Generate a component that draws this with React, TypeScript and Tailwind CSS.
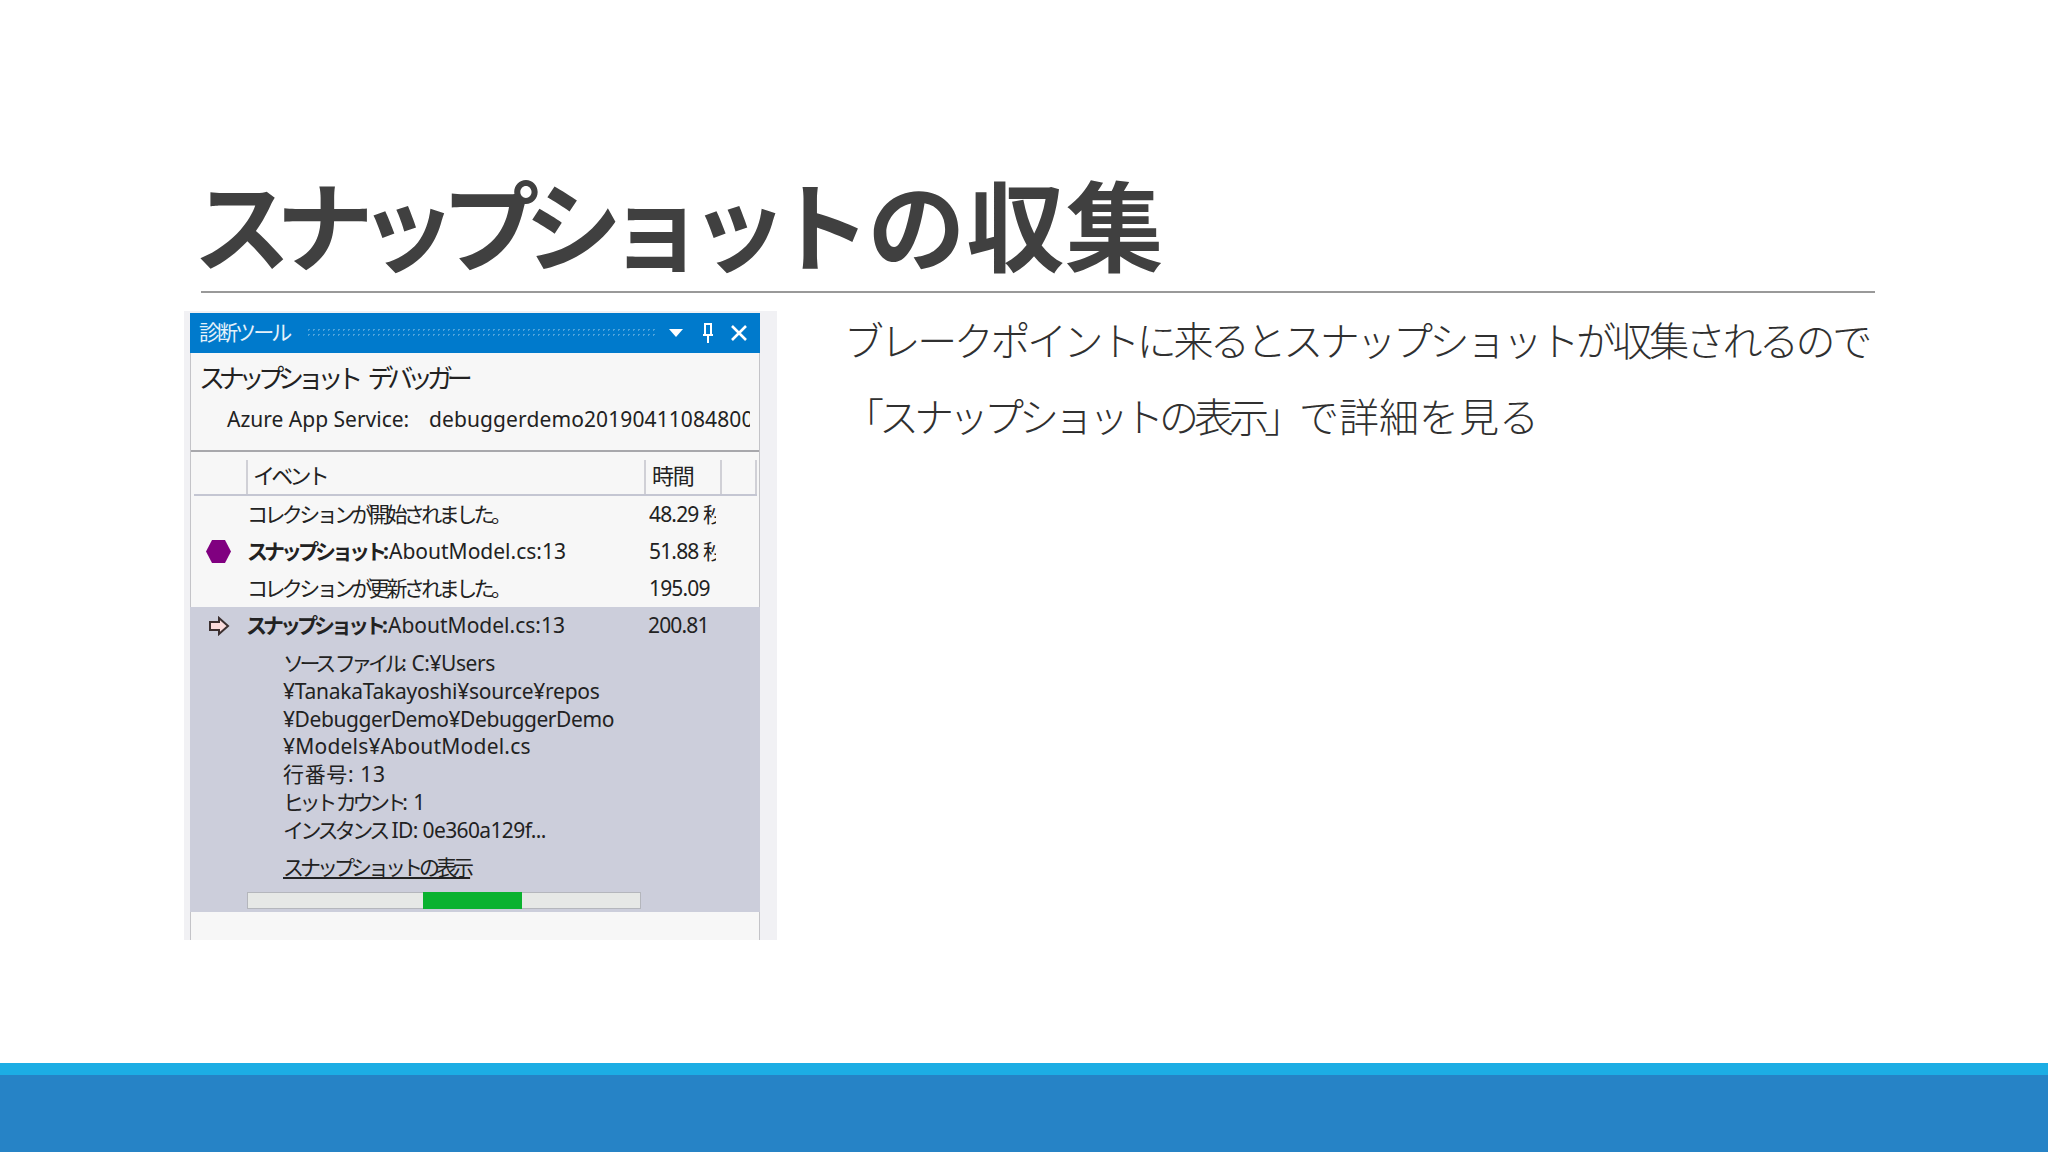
export default function App() {
  const cjk = "font-['Noto_Sans','Noto_Sans_CJK_JP',sans-serif]";
  const k = "tracking-[-0.17em]";
  const kw = "tracking-[-0.21em] [word-spacing:2px]";
  return (
    <div className={`w-[2048px] h-[1152px] bg-white flex flex-col overflow-hidden text-[#333333] ${cjk}`}>
      <div className="pt-[163px] ml-[201px] w-[1674px] border-b-2 border-[#999999] h-[293px] flex flex-col">
        <h1 className="-ml-[8px] text-[98px] leading-[127px] font-bold text-[#404040] whitespace-nowrap">
          <span className="tracking-[-0.155em]">スナップショット</span>
          <span className="ml-[12px] tracking-[0.01em]">の収集</span>
        </h1>
      </div>
      <div className="flex flex-1 mt-[18px] min-h-0">
        <div className="ml-[184px] w-[593px] h-[629px] bg-[#f1f1f4] pl-[6px] pr-[17px] pt-[2px] shrink-0">
          <div className="h-full bg-[#f7f7f7] border-x border-[#c4c4c8] flex flex-col text-[#222222]">
            <div className="h-[40px] bg-[#007acc] flex items-center text-white shrink-0 -mx-px">
              <span className="ml-[9px] text-[21px] tracking-[-0.14em] w-[107px] whitespace-nowrap text-[#e4f1fa]">診断ツール</span>
              <div className="w-[350px] h-[12px] bg-[radial-gradient(circle,#4da3db_1px,transparent_1px)] bg-[length:5px_5px]" />
              <svg width="16" height="10" viewBox="0 0 16 10" className="ml-[12px]"><path d="M1 1h14L8 9z" fill="#ffffff" /></svg>
              <svg width="14" height="22" viewBox="0 0 14 22" className="ml-[17px]" fill="none" stroke="#ffffff" strokeWidth="2"><path d="M4 2v10M10 2v10M2 13h10M3 2h8M7 13v8" /></svg>
              <svg width="18" height="18" viewBox="0 0 18 18" className="ml-[15px]" fill="none" stroke="#ffffff" strokeWidth="2.6"><path d="M2 2l14 14M16 2L2 16" /></svg>
            </div>
            <div className="h-[50px] pl-[8px] flex items-center text-[26px] tracking-[-0.24em] [word-spacing:10px] whitespace-nowrap shrink-0">スナップショット デバッガー</div>
            <div className="h-[34px] pl-[36px] flex items-center text-[21px] whitespace-nowrap shrink-0">
              <span className="w-[202px] shrink-0">Azure App Service:</span>
              <div className="w-[321px] overflow-hidden tracking-[0.005em]">debuggerdemo2019041108480000</div>
            </div>
            <div className="h-[15px] border-b-2 border-[#a8a8ac] shrink-0" />
            <div className="h-[44px] ml-[3px] mr-[2px] border-b-2 border-[#c4c6d2] flex items-end text-[22px] shrink-0">
              <div className="w-[52px] h-[34px]" />
              <div className={`w-[398px] h-[34px] border-l-2 border-[#d0d0d6] pl-[5px] pb-[3px] flex items-center ${k}`}>イベント</div>
              <div className="w-[76px] h-[34px] border-l-2 border-[#d0d0d6] pl-[6px] pb-[3px] flex items-center tracking-[-0.06em]">時間</div>
              <div className="flex-1 h-[34px] border-x-2 border-[#d0d0d6]" />
            </div>
            <Row icon={null} bold={false} text="コレクションが開始されました。" time="48.29 秒" />
            <Row
              icon={<svg width="25" height="25" viewBox="0 0 25 25" className="ml-[2px]"><path d="M6 1h13l6 11.500-6 11.500H6L0 12.500z" fill="#800080" /></svg>}
              bold
              text="スナップショット"
              time="51.88 秒"
            />
            <div className="h-[18px] flex items-start shrink-0 pt-0 -mb-px">
              <Row icon={null} bold={false} text="コレクションが更新されました。" time="195.09" />
            </div>
            <div className="flex-1 min-h-0 flex flex-col mt-[20px]">
              <div className="bg-[#cccedb] h-[305px] flex flex-col -mx-px">
                <Row
                  icon={<svg width="22" height="20" viewBox="0 0 22 20" fill="#fbdcdc" stroke="#3c3030" strokeWidth="2" className="ml-[5px]"><path d="M2 6h9V2l9 8-9 8v-4H2z" /></svg>}
                  bold
                  text="スナップショット"
                  time="200.81"
                />
                <div className="pl-[93px] pt-[6px] text-[21px] leading-[27.8px] whitespace-nowrap">
                  <div className="tracking-[-0.02em]"><span className={kw}>ソース ファイル</span>: C:¥Users</div>
                  <div className="tracking-[-0.012em]">¥TanakaTakayoshi¥source¥repos</div>
                  <div className="tracking-[-0.02em]">¥DebuggerDemo¥DebuggerDemo</div>
                  <div className="tracking-[0.01em]">¥Models¥AboutModel.cs</div>
                  <div className="tracking-[0.03em]">行番号: 13</div>
                  <div><span className={kw}>ヒット カウント</span>: 1</div>
                  <div className="tracking-[-0.03em]"><span className={k}>インスタンス</span> ID: 0e360a129f...</div>
                  <div className="mt-[9px] underline tracking-[-0.19em]">スナップショットの表示</div>
                </div>
                <div className="ml-[57px] mt-[11px] w-[394px] h-[17px] bg-[#e6e8e6] border border-[#b4b6bc] flex shrink-0">
                  <div className="w-[175px]" />
                  <div className="w-[99px] bg-[#0ab22f] -my-px" />
                </div>
              </div>
            </div>
          </div>
        </div>
        <div className="ml-[67px] -mt-[8px] text-[40px] leading-[76px] text-[#303030] whitespace-nowrap font-light">
          <p className="tracking-[-0.085em]">ブレークポイントに来るとスナップショットが収集されるので</p>
          <p>
            <span className="tracking-[-0.125em]">「スナップショットの表示」</span>
            <span>で詳細を見る</span>
          </p>
        </div>
      </div>
      <div className="h-[12px] bg-[#1cade4] shrink-0" />
      <div className="h-[77px] bg-[#2683c6] shrink-0" />
    </div>
  );
}

function Row({ icon, bold, text, time }: { icon: React.ReactNode; bold: boolean; text: string; time: string }) {
  return (
    <div className="h-[37px] flex items-center text-[21px] whitespace-nowrap shrink-0 w-full">
      <div className="w-[56px] pl-[13px] flex items-center justify-start shrink-0">{icon}</div>
      <div className="w-[402px] shrink-0">
        {bold ? (
          <>
            <span className="font-bold tracking-[-0.19em]">{text}:</span>
            <span className="ml-[4px]">AboutModel.cs:13</span>
          </>
        ) : (
          <span className="tracking-[-0.17em]">{text}</span>
        )}
      </div>
      <div className="w-[67px] overflow-hidden tracking-[-0.04em] shrink-0">{time}</div>
    </div>
  );
}
